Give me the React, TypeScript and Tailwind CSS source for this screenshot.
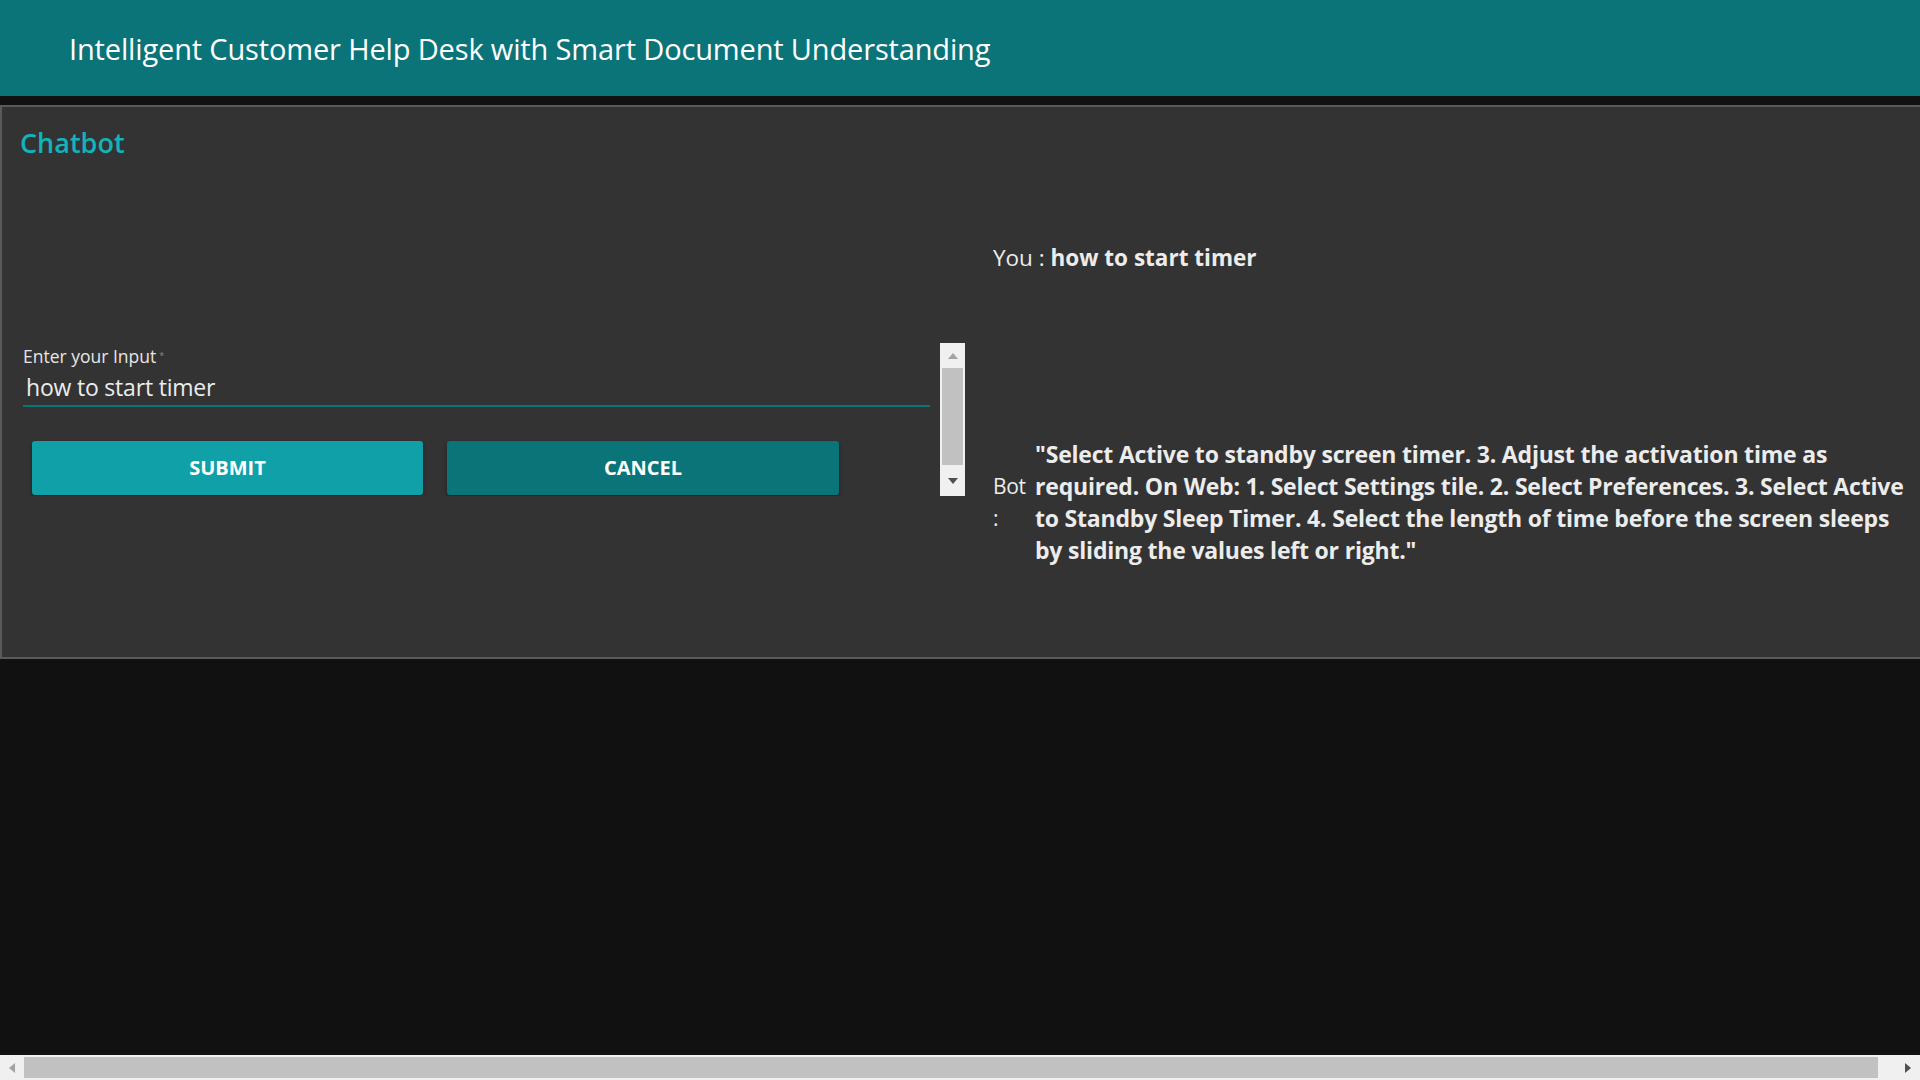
import React from "react";

const BOT_REPLY =
  '"Select Active to standby screen timer. 3. Adjust the activation time as required. On Web: 1. Select Settings tile. 2. Select Preferences. 3. Select Active to Standby Sleep Timer. 4. Select the length of time before the screen sleeps by sliding the values left or right."';

// scrollbar bits, drawn by hand because the screenshot is taken without native ones
const VScrollbar = () => (
  <div className="w-[25px] h-[153px] bg-[#f0f0f0] flex flex-col items-center shrink-0">
    <div className="h-[25px] flex items-center justify-center">
      <svg width="10" height="6" viewBox="0 0 10 6">
        <path d="M5 0 L10 6 L0 6 Z" fill="#a3a3a3" />
      </svg>
    </div>
    <div className="w-[21px] h-[97px] bg-[#c1c1c1]" />
    <div className="flex-1 flex items-center justify-center">
      <svg width="10" height="6" viewBox="0 0 10 6">
        <path d="M0 0 L10 0 L5 6 Z" fill="#505050" />
      </svg>
    </div>
  </div>
);

const HScrollbar = () => (
  <div className="h-[25px] bg-[#f0f0f0] flex items-center shrink-0">
    <div className="w-[24px] h-full flex items-center justify-center">
      <svg width="6" height="10" viewBox="0 0 6 10">
        <path d="M6 0 L6 10 L0 5 Z" fill="#a3a3a3" />
      </svg>
    </div>
    <div className="flex-1 h-[21px] bg-[#c1c1c1]" />
    <div className="w-[42px] h-full flex items-center justify-end pr-[9px]">
      <svg width="6" height="10" viewBox="0 0 6 10">
        <path d="M0 0 L6 5 L0 10 Z" fill="#505050" />
      </svg>
    </div>
  </div>
);

export default function App() {
  return (
    <div className="h-screen w-full overflow-hidden bg-[#111111] flex flex-col font-['Open_Sans','Noto_Sans',sans-serif]">
      <header className="h-[96px] shrink-0 bg-[#0a7479] flex items-center pl-[69px]">
        <h1 className="text-white text-[29px] tracking-[-0.15px] mt-[2px]">
          Intelligent Customer Help Desk with Smart Document Understanding
        </h1>
      </header>

      <div className="flex-1 pt-[9px]">
        <section className="h-[554px] bg-[#333333] border-2 border-r-0 border-[#5a5a5a] flex flex-col">
          <h2 className="text-[#12b3ba] text-[27px] font-semibold pl-[18px] pt-[18px] leading-[36px]">Chatbot</h2>

          <div className="flex">
            {/* input side */}
            <div className="w-[963px] shrink-0 pl-[10px] pt-[182px] flex">
              <div className="flex-1 h-[153px] overflow-hidden pr-[10px]">
                <div className="pl-[11px] pt-[3px]">
                  <label className="block h-[20px] text-[#e6e6e6] text-[17.5px] leading-[20px]">
                    Enter your Input
                    <sup className="text-[9px] text-[#8a8a8a] ml-[3px]">*</sup>
                  </label>
                  <div className="mt-[7px] border-b-2 border-[#0a7479] pb-[4px] pl-[3px]">
                    <span className="block text-[#ececec] text-[23px] leading-[28px] tracking-[-0.2px]">how to start timer</span>
                  </div>
                </div>
                <div className="flex gap-[24px] pl-[20px] pt-[34px]">
                  <button className="w-[391px] h-[54px] rounded-[3px] bg-[#0fa0a8] text-white text-[20px] font-bold shadow-[0_2px_4px_rgba(0,0,0,0.4)]">
                    SUBMIT
                  </button>
                  <button className="w-[392px] h-[54px] rounded-[3px] bg-[#0a7479] text-white text-[20px] font-bold shadow-[0_2px_4px_rgba(0,0,0,0.4)]">
                    CANCEL
                  </button>
                </div>
              </div>
              <VScrollbar />
            </div>

            {/* conversation side */}
            <div className="flex-1 pl-[28px] text-[#ececec]">
              <p className="mt-[82px] text-[22.5px] leading-[30px]">
                You : <span className="font-bold">how to start timer</span>
              </p>
              <div className="mt-[165px] flex items-center">
                <span className="w-[36px] mr-[6px] shrink-0 text-[21px] leading-[32px] tracking-[-0.3px]">Bot :</span>
                <p className="max-w-[886px] font-bold text-[23px] leading-[32px] tracking-[-0.2px]">{BOT_REPLY}</p>
              </div>
            </div>
          </div>
        </section>
      </div>

      <HScrollbar />
    </div>
  );
}
